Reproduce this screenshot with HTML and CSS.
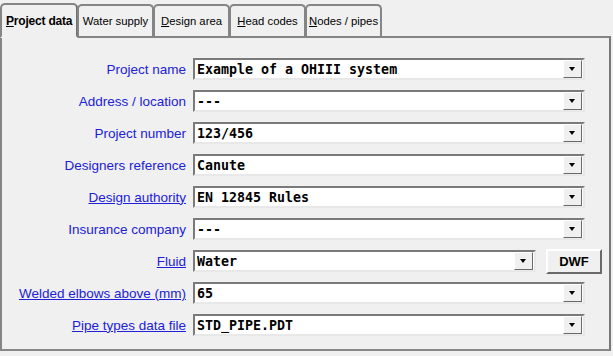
FILE: index.html
```html
<!DOCTYPE html>
<html lang="en">
<head>
  <meta charset="UTF-8" />
  <title>Project data</title>
  <link rel="stylesheet" href="styles.css">
</head>
<body>

<div class="tabs">
  <div class="tab active"><u>P</u>roject data</div>
  <div class="tab">Water supply</div>
  <div class="tab"><u>D</u>esign area</div>
  <div class="tab"><u>H</u>ead codes</div>
  <div class="tab"><u>N</u>odes / pipes</div>
</div>

<div class="panel">
  <div class="form">
    <label>Project name</label>
    <div class="combo"><span>Example of a OHIII system</span><i class="drop"></i></div>

    <label>Address / location</label>
    <div class="combo"><span>---</span><i class="drop"></i></div>

    <label>Project number</label>
    <div class="combo"><span>123/456</span><i class="drop"></i></div>

    <label>Designers reference</label>
    <div class="combo"><span>Canute</span><i class="drop"></i></div>

    <label class="link">Design authority</label>
    <div class="combo"><span>EN 12845 Rules</span><i class="drop"></i></div>

    <label>Insurance company</label>
    <div class="combo"><span>---</span><i class="drop"></i></div>

    <label class="link">Fluid</label>
    <div class="with-btn">
      <div class="combo short"><span>Water</span><i class="drop"></i></div>
      <button class="btn">DWF</button>
    </div>

    <label class="link">Welded elbows above (mm)</label>
    <div class="combo"><span>65</span><i class="drop"></i></div>

    <label class="link">Pipe types data file</label>
    <div class="combo"><span>STD_PIPE.PDT</span><i class="drop"></i></div>
  </div>
</div>

</body>
</html>
```

FILE: styles.css
```css
* { box-sizing: border-box; }

body {
  margin: 0; background: #f0f0f0; color: #000;
  font-family: Tahoma, 'DejaVu Sans', sans-serif; font-size: 11px;
  width: 613px; height: 356px; overflow: hidden;
}

.tabs {
  display: flex; align-items: flex-end;
  height: 36px; padding-left: 0;
  position: relative; z-index: 1;
}

.tab {
  width: 77px; height: 32px;
  border: 2px solid #858585; border-bottom: none;
  border-radius: 5px 5px 0 0;
  display: flex; align-items: center; justify-content: center;
  font-family: 'Liberation Sans', Arial, sans-serif; font-size: 11.3px;
  white-space: nowrap; overflow: hidden;
  margin-left: -1px;
}

.tab.active {
  width: 78px; height: 35px; margin-left: 0; margin-bottom: -2px;
  background: #f0f0f0; border-bottom: 2px solid #f0f0f0;
  font-size: 12px; font-weight: bold; letter-spacing: -0.2px;
  justify-content: flex-start; padding-left: 4px;
  border-right-color: #6f6f6f;
}

.panel {
  width: 611px; height: 315px;
  border: 2px solid #858585;
  border-right-color: #777; border-bottom-color: #888;
  padding: 20px 0 0 0;
}

.form {
  display: grid; grid-template-columns: 184px 392px;
  column-gap: 7px; row-gap: 10px;
  grid-auto-rows: 22px; align-items: center;
}

label {
  text-align: right; color: #2020d8;
  font-family: 'Liberation Sans', Arial, sans-serif; font-size: 13.5px;
  white-space: nowrap;
}

label.link { text-decoration: underline; }

.combo {
  height: 22px; display: flex; align-items: center;
  background: #fff;
  border: 2px solid; border-color: #7a7a7a #e8e8e8 #e8e8e8 #7a7a7a;
  padding: 0 1px 0 2px;
}

.combo span {
  flex: 1;
  font-family: 'DejaVu Sans Mono', 'Liberation Mono', monospace;
  font-size: 13.3px; font-weight: bold;
  white-space: nowrap; overflow: hidden;
}

.drop {
  width: 19px; height: 18px; position: relative;
  background: #f0f0f0;
  border: 1px solid; border-color: #fff #6a6a6a #6a6a6a #fff;
}

.drop::after {
  content: ''; position: absolute; left: 5px; top: 6px;
  border-left: 3.5px solid transparent; border-right: 3.5px solid transparent;
  border-top: 4px solid #000;
}

.with-btn { display: flex; align-items: center; gap: 10px; }
.combo.short { width: 343px; flex-shrink: 0; }

.btn {
  width: 56px; height: 25px; padding: 0; flex-shrink: 0;
  background: #f0f0f0;
  border: 2px solid; border-color: #fff #6a6a6a #6a6a6a #fff;
  font-family: 'Liberation Sans', Arial, sans-serif; font-size: 13px; font-weight: bold;
}
```
